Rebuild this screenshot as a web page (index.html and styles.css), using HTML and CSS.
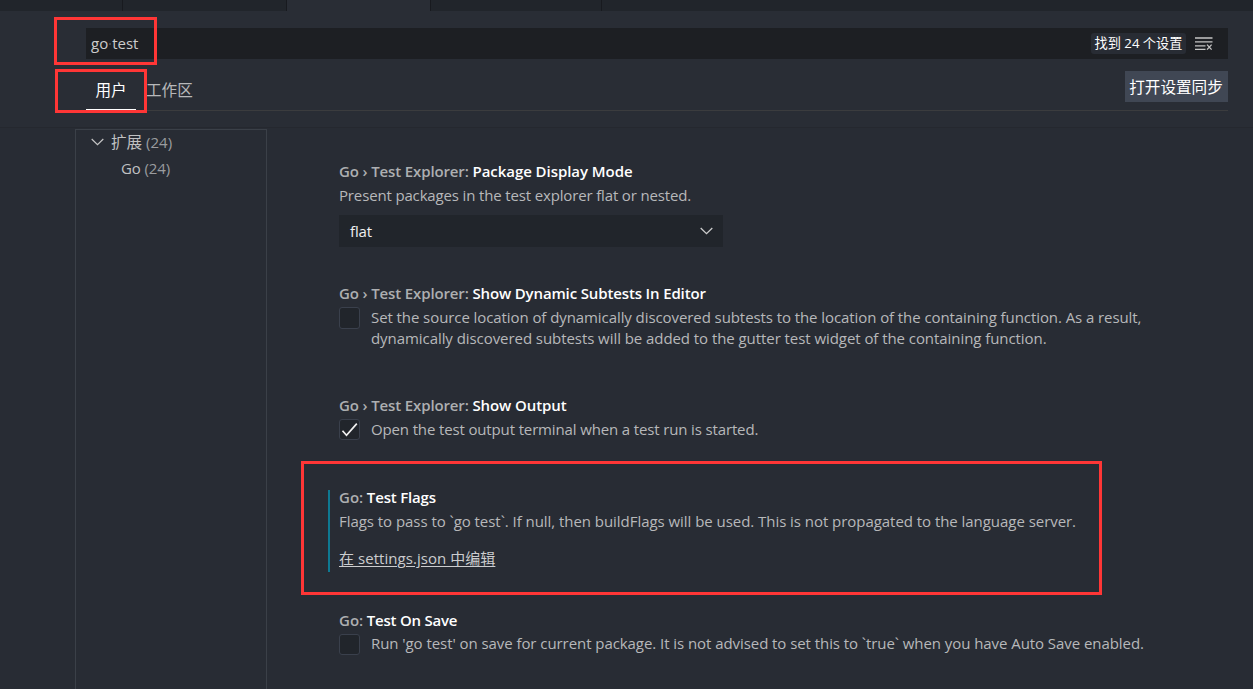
FILE: index.html
```html
<!DOCTYPE html>
<html lang="zh-CN">
<head>
<meta charset="utf-8">
<title>设置</title>
<link rel="stylesheet" href="styles.css">
</head>
<body>
<div class="editor-tabs">
  <div class="editor-tab tab-a"></div>
  <div class="editor-tab tab-b"></div>
  <div class="editor-tab tab-c active"></div>
  <div class="editor-tab tab-d"></div>
  <div class="editor-tab tab-e"></div>
</div>
<header class="settings-header">
  <div class="search">
    <span class="query">go<i class="space-dot"></i>test</span>
    <span class="count">找到 24 个设置</span>
    <svg class="clear-icon" width="18" height="14" viewBox="0 0 18 14" fill="none" stroke="#c5c5c5" stroke-width="1.3">
      <path d="M0 1h17.5M0 4.8h17.5M0 8.8h10.5M0 12.4h10.5"/><path d="M12 7.6l4.6 5M16.6 7.6l-4.6 5"/>
    </svg>
  </div>
  <div class="scope-row">
    <div class="scopes"><span class="scope selected">用户</span><span class="scope workspace">工作区</span></div>
    <button class="sync">打开设置同步</button>
  </div>
</header>
<main class="settings-body">
  <nav class="tree">
    <div class="tree-row">
      <svg class="chevron" width="13" height="8" viewBox="0 0 13 8" fill="none" stroke="#c5c5c5" stroke-width="1.2"><path d="M.7 1l5.8 5.6L12.3 1"/></svg>
      <span><span class="cjk">扩展</span> <span class="num">(24)</span></span>
    </div>
    <div class="tree-row child"><span>Go <span class="num">(24)</span></span></div>
  </nav>
  <section class="list">
    <article class="item package-mode">
      <h3><span class="category">Go › Test Explorer:</span> Package Display Mode</h3>
      <p class="t-present">Present packages in the test explorer flat or nested.</p>
      <div class="select"><span>flat</span>
        <svg width="13" height="8" viewBox="0 0 13 8" fill="none" stroke="#cccccc" stroke-width="1.3"><path d="M.7 1l5.8 5.6L12.3 1"/></svg>
      </div>
    </article>
    <article class="item subtests">
      <h3><span class="category">Go › Test Explorer:</span> Show Dynamic Subtests In Editor</h3>
      <div class="check-row"><span class="checkbox"></span>
        <p><span class="t-set">Set the source location of dynamically discovered subtests to the location of the containing function. As a result,</span><br><span class="t-dyn">dynamically discovered subtests will be added to the gutter test widget of the containing function.</span></p>
      </div>
    </article>
    <article class="item output">
      <h3><span class="category">Go › Test Explorer:</span> Show Output</h3>
      <div class="check-row"><span class="checkbox"><svg width="19" height="19" viewBox="0 0 19 19" fill="none" stroke="#f0f0f0" stroke-width="1.7"><path d="M2.5 10.8l4 4.5L16.8 3.6"/></svg></span>
        <p class="t-open">Open the test output terminal when a test run is started.</p>
      </div>
    </article>
    <article class="item flags">
      <h3><span class="category short">Go:</span> Test Flags</h3>
      <p class="t-flags">Flags to pass to `go test`. If null, then buildFlags will be used. This is not propagated to the language server.</p>
      <a class="edit">在 settings.json 中编辑</a>
    </article>
    <article class="item on-save">
      <h3><span class="category short">Go:</span> Test On Save</h3>
      <div class="check-row"><span class="checkbox"></span>
        <p class="t-run">Run 'go test' on save for current package. It is not advised to set this to `true` when you have Auto Save enabled.</p>
      </div>
    </article>
  </section>
</main>
<div class="mark mark-search"></div>
<div class="mark mark-user"></div>
<div class="mark mark-flags"></div>
</body>
</html>
```

FILE: styles.css
```css
* { box-sizing: border-box; }
body {
  margin: 0;
  width: 1253px;
  height: 689px;
  overflow: hidden;
  position: relative;
  display: flex;
  flex-direction: column;
  background: #282c34;
  color: #b7b8ba;
  font-family: "Open Sans", "Noto Sans CJK SC", sans-serif;
  font-size: 15px;
  line-height: 21px;
  white-space: nowrap;
}
h3, p { margin: 0; }
.editor-tabs { display: flex; height: 11px; flex: none; background: #21252b; }
.editor-tab { border-right: 1px solid #181a1f; }
.editor-tab.active { background: #292d35; }
.tab-a { width: 123px; }
.tab-b { width: 164px; }
.tab-c { width: 144px; }
.tab-d { width: 171px; }
.tab-e { flex: 1; border: 0; }

.settings-header { flex: none; height: 116px; padding: 17px 25px 0 86px; background: #292d35; }
.search { height: 31px; display: flex; align-items: center; background: #1d1f23; padding: 0 15px 0 5px; }
.query { flex: 1; color: #ccc; }
.space-dot { display: inline-block; width: 2px; height: 2px; margin: 0 1px; background: #45484d; vertical-align: 4px; }
.count { height: 21px; width: 95px; text-align: center; border-radius: 3px; background: #282c34; color: #fff; font-size: 13.2px; line-height: 21px; }
.clear-icon { margin-left: 9px; }
.scope-row { height: 52px; display: flex; justify-content: space-between; border-bottom: 1px solid #3b3c3e; }
.scopes { display: flex; align-items: flex-end; font-size: 15.6px; }
.scope { height: 38px; line-height: 36px; }
.selected { width: 50px; text-align: center; color: #fff; border-bottom: 1px solid #fff; }
.workspace { margin-left: 10px; }
.sync { margin: 12px 0 0; padding: 2px 1px 0 0; width: 103px; height: 31px; border: 0; background: #404754; color: #fff; font: inherit; font-size: 15.6px; }

.settings-body { flex: 1; display: flex; padding: 2px 0 0 75px; box-shadow: inset 0 1px #25282f; }
.tree { width: 192px; border: 1px solid #3b4048; border-bottom: 0; }
.tree-row { height: 26px; line-height: 24px; display: flex; align-items: center; padding: 0 0 2px 15px; color: #c0c1c3; }
.tree-row.child { padding-left: 45px; letter-spacing: -.12px; }
.chevron { margin-right: 7px; }
.cjk { font-size: 15.6px; }
.num { color: #9a9c9f; }

.list { padding: 32px 0 0 61px; display: flex; flex-direction: column; }
.item { padding-left: 9px; border-left: 2px solid transparent; }
h3 { font-size: 15px; font-weight: 600; line-height: 20px; height: 24px; color: #fff; letter-spacing: -.1px; }
.category { color: #adafb1; letter-spacing: -.13px; }
.category.short { letter-spacing: 0; }
.package-mode { height: 122px; }
.package-mode h3 { letter-spacing: -.05px; }
.package-mode .category, .subtests .category, .output .category { letter-spacing: -.13px; }
.subtests { height: 112px; }
.subtests h3 { letter-spacing: -.14px; }
.output { height: 95px; }
.flags { height: 82px; margin-bottom: 38px; border-left-color: #0e7992; }
.flags h3 { line-height: 14px; height: 21px; letter-spacing: -.18px; }
.on-save h3 { height: 23px; letter-spacing: -.22px; }
.t-present { letter-spacing: -.15px; }
.t-set { letter-spacing: -.08px; }
.t-dyn { letter-spacing: -.062px; }
.t-open { letter-spacing: -.14px; }
.t-flags { letter-spacing: -.045px; }
.t-run { letter-spacing: -.062px; }
.select { margin-top: 9px; width: 384px; height: 32px; padding: 0 10px 0 11px; display: flex; align-items: center; justify-content: space-between; background: #21252b; color: #f0f0f0; letter-spacing: -.15px; }
.check-row { display: flex; }
.checkbox { flex: none; width: 21px; height: 21px; margin-right: 11px; border: 1px solid #3a404c; border-radius: 3px; background: #21252b; }
.subtests .checkbox { height: 22px; }
.on-save .checkbox { margin-top: 1px; }
.checkbox svg { display: block; }
.edit { display: block; width: max-content; margin-top: 16px; color: #cccdcf; text-decoration: underline; text-underline-offset: 2px; letter-spacing: .05px; }

.mark { position: absolute; border: 3px solid #ff3636; }
.mark-search { left: 54px; top: 17px; width: 103px; height: 48px; }
.mark-user { left: 55px; top: 69px; width: 92px; height: 44px; }
.mark-flags { left: 301px; top: 461px; width: 801px; height: 134px; }
```
